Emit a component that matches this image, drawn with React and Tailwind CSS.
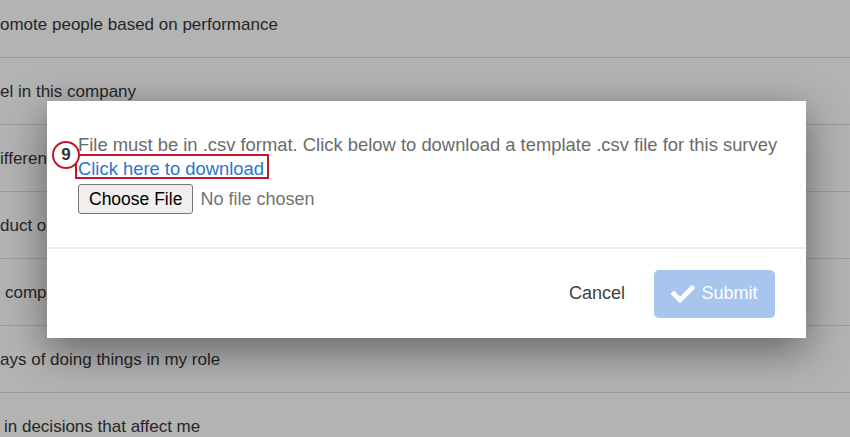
import React from 'react';
import { FaCheck } from 'react-icons/fa';

const rows = [
    { text: 'omote people based on performance', pad: 'pl-0' },
    { text: 'el in this company', pad: 'pl-0' },
    { text: 'ifferent', pad: 'pl-0' },
    { text: 'duct or', pad: 'pl-0' },
    { text: 'compa', pad: 'pl-[5px]' },
    { text: 'ays of doing things in my role', pad: 'pl-0' },
    { text: 'in decisions that affect me', pad: 'pl-[4px]' },
];

const App = () => {
    return (
        <div className="relative w-full h-[437px] overflow-hidden bg-[#b3b3b3]" style={{ fontFamily: '"Liberation Sans", Arial, sans-serif' }}>
            {/* background survey rows, dimmed */}
            <div className="-mt-[9px] flex flex-col">
                {rows.map((row, i) => (
                    <div key={i} className={`h-[67px] flex items-center pt-[2px] border-b border-[#9c9c9c] text-[17px] text-[#262626] whitespace-nowrap ${row.pad}`}>
                        {row.text}
                    </div>
                ))}
            </div>

            {/* upload dialog */}
            <div className="absolute left-[47px] top-[101px] w-[759px] bg-white shadow-[0_12px_40px_rgba(0,0,0,0.45)]">
                <div className="pt-[32px] px-[31px] pb-[33px]">
                    <div className="relative">
                        <p className="text-[18.4px] leading-[24px] text-[#6b6b6b] whitespace-nowrap">
                            File must be in .csv format. Click below to download a template .csv file for this survey
                        </p>
                        <p className="text-[18.4px] leading-[24px]">
                            <a href="#" className="text-[#2b77c8] underline underline-offset-2">Click here to download</a>
                        </p>
                        <div className="mt-[3px] flex items-center">
                            <button className="h-[30px] px-[10px] border border-[#767676] rounded-[3px] bg-[#efefef] text-[17.5px] text-black">
                                Choose File
                            </button>
                            <span className="ml-[7px] text-[18px] text-[#737373]">No file chosen</span>
                        </div>

                        {/* annotation */}
                        <div className="absolute left-[-3px] top-[21px] w-[194px] h-[25px] border-2 border-[#c2162e]"></div>
                        <div className="absolute left-[-26px] top-[8px] w-[28px] h-[28px] rounded-full border-[2.5px] border-[#c2162e] bg-white flex items-center justify-center text-[17px] font-bold text-[#333]">
                            9
                        </div>
                    </div>
                </div>
                <div className="h-[2px] bg-[#ececec]"></div>
                <div className="h-[89px] flex items-center justify-end gap-[29px] pr-[31px]">
                    <button className="text-[18px] text-[#3f3f3f]">Cancel</button>
                    <button className="h-[48px] w-[121px] rounded-[5px] bg-[#a8c5ed] flex items-center justify-center gap-[6px] text-white text-[18px]">
                        <FaCheck size={24} />
                        Submit
                    </button>
                </div>
            </div>
        </div>
    );
};

export default App;
